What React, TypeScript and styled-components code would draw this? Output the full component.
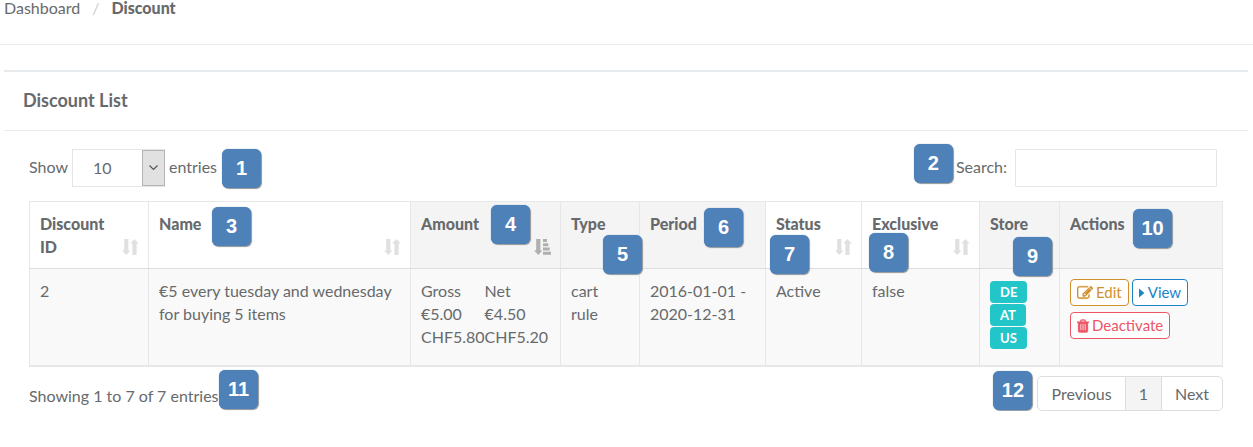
import React from "react";
import styled, { createGlobalStyle } from "styled-components";

const GlobalStyle = createGlobalStyle`
  * { box-sizing: border-box; }
  body {
    margin: 0;
    background: #fff;
    color: #676a6c;
    font-family: Lato, "Liberation Sans", sans-serif;
    font-size: 16px;
    line-height: 23px;
  }
  button, input, select { font: inherit; color: inherit; }
`;

const Breadcrumb = styled.nav`
  height: 45px;
  border-bottom: 1px solid #e7eaec;
  padding-left: 4px;

  ol {
    display: flex;
    margin: 0;
    padding: 0;
    list-style: none;
    line-height: 15px;
  }
  li + li::before {
    content: "/";
    color: #ccc;
    font-weight: 400;
    padding: 0 12px;
  }
  a { color: inherit; text-decoration: none; }
`;

const Current = styled.li`
  font-weight: 900;
`;

const Panel = styled.section`
  margin: 25px 5px 0 4px;
  border-top: 2px solid #e7eaec;
`;

const PanelTitle = styled.h1`
  margin: 0;
  padding: 17px 19px 18px;
  border-bottom: 1px solid #e7eaec;
  font-size: 18px;
  line-height: 23px;
  font-weight: 700;
`;

const PanelBody = styled.div`
  padding: 18px 25px 0;
`;

const Toolbar = styled.div`
  display: flex;
  justify-content: space-between;
  padding-right: 6px;
  margin-bottom: 14px;
`;

const Field = styled.div`
  position: relative;
  display: flex;
  align-items: center;
  label, span { padding-bottom: 4px; }
`;

const SelectBox = styled.div`
  position: relative;
  margin: 0 4px;
`;

const LengthSelect = styled.select`
  appearance: none;
  display: block;
  width: 93px;
  height: 38px;
  padding: 0 20px 2px;
  border: 1px solid #e5e6e7;
  border-radius: 0;
  background: #fff;
`;

const SelectArrow = styled.svg`
  position: absolute;
  right: 0;
  top: 1px;
  width: 23px;
  height: 36px;
  pointer-events: none;
`;

const SearchInput = styled.input`
  width: 202px;
  height: 38px;
  margin-left: 8px;
  padding: 6px 12px;
  border: 1px solid #e5e6e7;
  border-radius: 1px;
  background: #fff;
`;

const Marker = styled.b<{ $x: number; $y: number }>`
  position: absolute;
  z-index: 1;
  left: ${(p) => p.$x}px;
  top: ${(p) => p.$y}px;
  width: 39px;
  height: 39px;
  border-radius: 6px;
  background: #4f81b9;
  box-shadow: 0 0 1px #4f81b9, 1px 1px 1px #999;
  color: #fff;
  font: bold 20px/38px "Liberation Sans", Arial, sans-serif;
  text-align: center;
`;

const DataTable = styled.table`
  width: 100%;
  table-layout: fixed;
  border-collapse: collapse;
  border: 1px solid #e7e7e7;
  border-bottom-width: 2px;
`;

const HeadCell = styled.th<{ $plain?: boolean; $sortable?: boolean }>`
  position: relative;
  height: 67px;
  padding: 10px ${(p) => (p.$sortable ? 30 : 10)}px 10px 10px;
  border: 1px solid #e7e7e7;
  border-bottom-color: #ddd;
  background: ${(p) => (p.$plain ? "#f4f4f5" : "#fff")};
  font-weight: 900;
  text-align: left;
  vertical-align: top;
  white-space: normal;
`;

const SortIcon = styled.svg<{ $active?: boolean }>`
  position: absolute;
  right: 9px;
  bottom: 13px;
  width: 17px;
  height: 16px;
  fill: ${(p) => (p.$active ? "#afafb0" : "#e0e0e1")};
`;

const Cell = styled.td`
  height: 97px;
  padding: 10px 10px 0;
  border: 1px solid #e7e7e7;
  border-bottom: 2px solid #e7e7e7;
  background: #f9f9f9;
  vertical-align: top;
`;

const AmountTable = styled.table`
  border-collapse: collapse;
  th, td {
    padding: 0;
    font-weight: 400;
    text-align: left;
    line-height: 23px;
  }
`;

const StoreList = styled.ul`
  display: flex;
  flex-direction: column;
  align-items: flex-start;
  gap: 1px;
  margin: 0;
  padding: 2px 0 0;
  list-style: none;
`;

const StoreLabel = styled.li`
  padding: 0 10px;
  border-radius: 4px;
  background: #23c6c8;
  color: #fff;
  font-size: 13px;
  line-height: 22px;
  font-weight: 700;
`;

const Actions = styled.div`
  display: flex;
  flex-wrap: wrap;
  gap: 6px 3px;
`;

const ActionButton = styled.button<{ $color: string }>`
  display: flex;
  align-items: center;
  height: 27px;
  gap: 3px;
  padding: 0 6px;
  border: 1px solid ${(p) => p.$color};
  border-radius: 4px;
  background: #fff;
  color: ${(p) => p.$color};
  font-size: 15px;
  svg { display: block; height: 16px; fill: currentColor; }
`;

const Footer = styled.footer`
  display: flex;
  justify-content: space-between;
  align-items: flex-start;
  padding-top: 9px;
`;

const Info = styled.div`
  position: relative;
  padding-top: 8px;
`;

const Pager = styled.nav`
  position: relative;
  display: flex;
`;

const PageButton = styled.button<{ $active?: boolean }>`
  height: 35px;
  padding: 0 13px;
  border: 1px solid #ddd;
  background: ${(p) => (p.$active ? "#f4f4f4" : "#fff")};
  & + & { margin-left: -1px; }
  &:first-of-type { border-radius: 5px 0 0 5px; }
  &:last-of-type { border-radius: 0 5px 5px 0; }
`;

const SortBoth = () => (
  <SortIcon viewBox="0 0 17 16" aria-hidden="true">
    <path d="M2.2 0h4.2v11.5h2L4.3 16 0 11.5h2.2zM10.4 16h4.2V4.5h2L12.4 0 8.2 4.5h2.2z" />
  </SortIcon>
);

const SortAscending = () => (
  <SortIcon $active viewBox="0 0 17 16" aria-hidden="true">
    <path d="M2.2 0h4.2v11.5h2L4.3 16 0 11.5h2.2zM9 0h4v3H9zM9 4.3h5.3v3H9zM9 8.6h6.7v3H9zM9 12.8h8v3H9z" />
  </SortIcon>
);

const EditIcon = () => (
  <svg width="16" viewBox="0 0 1792 1792" aria-hidden="true">
    <path stroke="currentColor" strokeWidth="40" d="M888 1184l116-116-152-152-116 116v56h96v96h56zm440-720q-16-16-33 1l-350 350q-17 17-1 33t33-1l350-350q17-17 1-33zm80 594v190q0 119-84.5 203.5t-203.5 84.5h-832q-119 0-203.5-84.5t-84.5-203.5v-832q0-119 84.5-203.5t203.5-84.5h832q63 0 117 25 15 7 18 23 3 17-9 29l-49 49q-14 14-32 8-23-6-45-6h-832q-66 0-113 47t-47 113v832q0 66 47 113t113 47h832q66 0 113-47t47-113v-126q0-13 9-22l64-64q15-15 35-7t20 29zm-96-738l288 288-672 672h-288v-288zm444 132l-92 92-288-288 92-92q28-28 68-28t68 28l152 152q28 28 28 68t-28 68z" />
  </svg>
);

const CaretIcon = () => (
  <svg width="6" viewBox="0 0 6 16" aria-hidden="true">
    <path d="M0 3.4v9.2L5.4 8z" />
  </svg>
);

const TrashIcon = () => (
  <svg width="12" viewBox="190 128 1410 1536" aria-hidden="true">
    <path stroke="currentColor" strokeWidth="40" d="M704 1376v-704q0-14-9-23t-23-9h-64q-14 0-23 9t-9 23v704q0 14 9 23t23 9h64q14 0 23-9t9-23zm256 0v-704q0-14-9-23t-23-9h-64q-14 0-23 9t-9 23v704q0 14 9 23t23 9h64q14 0 23-9t9-23zm256 0v-704q0-14-9-23t-23-9h-64q-14 0-23 9t-9 23v704q0 14 9 23t23 9h64q14 0 23-9t9-23zm-544-992h448l-48-117q-7-9-17-11h-317q-10 2-17 11zm928 32v64q0 14-9 23t-23 9h-96v948q0 83-47 143.5t-113 60.5h-832q-66 0-113-58.5t-47-141.5v-952h-96q-14 0-23-9t-9-23v-64q0-14 9-23t23-9h309l70-167q15-37 54-63t79-26h320q40 0 79 26t54 63l70 167h309q14 0 23 9t9 23z" />
  </svg>
);

type Column = {
  title: string;
  width?: number;
  sort?: "both" | "asc";
  plain?: boolean;
  marker?: [label: number, x: number, y: number];
};

const columns: Column[] = [
  { title: "Discount ID", width: 119, sort: "both" },
  { title: "Name", sort: "both", marker: [3, 63, 5] },
  { title: "Amount", width: 150, sort: "asc", plain: true, marker: [4, 80, 3] },
  { title: "Type", width: 79, plain: true, marker: [5, 42, 33] },
  { title: "Period", width: 126, plain: true, marker: [6, 64, 6] },
  { title: "Status", width: 96, sort: "both", marker: [7, 4, 33] },
  { title: "Exclusive", width: 118, sort: "both", marker: [8, 7, 31] },
  { title: "Store", width: 80, plain: true, marker: [9, 33, 35] },
  { title: "Actions", width: 163, plain: true, marker: [10, 73, 7] },
];

export default function App() {
  return (
    <>
      <GlobalStyle />
      <Breadcrumb aria-label="Breadcrumb">
        <ol>
          <li><a href="#dashboard">Dashboard</a></li>
          <Current aria-current="page">Discount</Current>
        </ol>
      </Breadcrumb>
      <Panel>
        <PanelTitle>Discount List</PanelTitle>
        <PanelBody>
          <Toolbar>
            <Field>
              <label htmlFor="length">Show</label>
              <SelectBox>
                <LengthSelect id="length" defaultValue="10">
                  <option>10</option>
                  <option>25</option>
                  <option>50</option>
                </LengthSelect>
                <SelectArrow viewBox="0 0 23 36" aria-hidden="true">
                  <rect x="0.5" y="0.5" width="22" height="35" fill="#e1e1e1" stroke="#b4b4b4" />
                  <path d="M7.5 15.5l4 4 4-4" fill="none" stroke="#555" strokeWidth="1.2" />
                </SelectArrow>
              </SelectBox>
              <span>entries</span>
              <Marker $x={193} $y={0}>1</Marker>
            </Field>
            <Field>
              <Marker $x={-42} $y={-5}>2</Marker>
              <label htmlFor="search">Search:</label>
              <SearchInput id="search" type="search" />
            </Field>
          </Toolbar>
          <DataTable>
            <colgroup>
              {columns.map((c) => <col key={c.title} width={c.width} />)}
            </colgroup>
            <thead>
              <tr>
                {columns.map((c) => (
                  <HeadCell key={c.title} $plain={c.plain} $sortable={c.sort === "both"} scope="col">
                    {c.title}
                    {c.sort === "both" && <SortBoth />}
                    {c.sort === "asc" && <SortAscending />}
                    {c.marker && <Marker $x={c.marker[1]} $y={c.marker[2]}>{c.marker[0]}</Marker>}
                  </HeadCell>
                ))}
              </tr>
            </thead>
            <tbody>
              <tr>
                <Cell>2</Cell>
                <Cell>€5 every tuesday and wednesday for buying 5 items</Cell>
                <Cell>
                  <AmountTable>
                    <thead>
                      <tr><th scope="col">Gross</th><th scope="col">Net</th></tr>
                    </thead>
                    <tbody>
                      <tr><td>€5.00</td><td>€4.50</td></tr>
                      <tr><td>CHF5.80</td><td>CHF5.20</td></tr>
                    </tbody>
                  </AmountTable>
                </Cell>
                <Cell>cart rule</Cell>
                <Cell>2016-01-01 - 2020-12-31</Cell>
                <Cell>Active</Cell>
                <Cell>false</Cell>
                <Cell>
                  <StoreList>
                    <StoreLabel>DE</StoreLabel>
                    <StoreLabel>AT</StoreLabel>
                    <StoreLabel>US</StoreLabel>
                  </StoreList>
                </Cell>
                <Cell>
                  <Actions>
                    <ActionButton $color="#d1902c"><EditIcon />Edit</ActionButton>
                    <ActionButton $color="#1c84c6"><CaretIcon />View</ActionButton>
                    <ActionButton $color="#ed5565"><TrashIcon />Deactivate</ActionButton>
                  </Actions>
                </Cell>
              </tr>
            </tbody>
          </DataTable>
          <Footer>
            <Info>
              Showing 1 to 7 of 7 entries
              <Marker $x={190} $y={-6}>11</Marker>
            </Info>
            <Pager aria-label="Pagination">
              <Marker $x={-44} $y={-5}>12</Marker>
              <PageButton>Previous</PageButton>
              <PageButton $active aria-current="page">1</PageButton>
              <PageButton>Next</PageButton>
            </Pager>
          </Footer>
        </PanelBody>
      </Panel>
    </>
  );
}
